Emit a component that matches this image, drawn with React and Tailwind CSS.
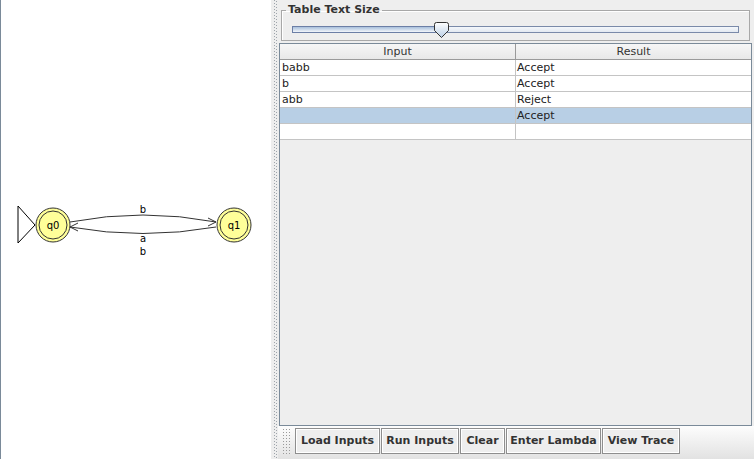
const rows = [
  { input: 'babb', result: 'Accept' },
  { input: 'b', result: 'Accept' },
  { input: 'abb', result: 'Reject' },
  { input: '', result: 'Accept', selected: true },
  { input: '', result: '' },
];

const buttons = [
  { label: 'Load Inputs', w: 'w-[85px]' },
  { label: 'Run Inputs', w: 'w-[78px]' },
  { label: 'Clear', w: 'w-[45px]' },
  { label: 'Enter Lambda', w: 'w-[95px]' },
  { label: 'View Trace', w: 'w-[78px]' },
];

function State({ cx, label }) {
  return (
    <g>
      <circle cx={cx} cy="225" r="17" fill="#ffff99" stroke="#333" strokeWidth="1" />
      <circle cx={cx} cy="225" r="14" fill="none" stroke="#333" strokeWidth="1" />
      <text x={cx} y="229" textAnchor="middle" fontSize="10" fill="#000" fontFamily="DejaVu Sans, sans-serif">
        {label}
      </text>
    </g>
  );
}

function Diagram() {
  return (
    <svg width="270" height="459" viewBox="1 0 270 459" className="block">
      <polygon points="18,206 35,225 18,243" fill="#fff" stroke="#000" strokeWidth="1" />
      <path d="M70 222 Q143 208 216 222" fill="none" stroke="#333" strokeWidth="1" />
      <path d="M208 218 L216 222 L208 226" fill="none" stroke="#333" strokeWidth="1" />
      <path d="M216 227 Q143 240 70 227" fill="none" stroke="#333" strokeWidth="1" />
      <path d="M78 223 L70 227 L78 231" fill="none" stroke="#333" strokeWidth="1" />
      <g fontSize="10" fill="#000" fontFamily="DejaVu Sans, sans-serif" textAnchor="middle">
        <text x="143" y="213">b</text>
        <text x="143" y="242">a</text>
        <text x="143" y="255">b</text>
      </g>
      <State cx={53} label="q0" />
      <State cx={234} label="q1" />
    </svg>
  );
}

export default function App() {
  return (
    <div className="flex h-[459px] w-[754px] overflow-hidden bg-[#eeeeee] text-[#222] font-['DejaVu_Sans',sans-serif]">
      {/* Graph canvas */}
      <div className="w-[271px] shrink-0 border-l border-[#7a8a99] bg-white">
        <Diagram />
      </div>

      {/* Split divider */}
      <div className="flex w-[7px] shrink-0 gap-[1px] pl-[3px]">
        <div className="w-[1px] bg-[linear-gradient(#9ea4ab_1px,transparent_1px)] bg-[length:1px_3px]" />
        <div className="mt-[1px] w-[1px] bg-[linear-gradient(#9ea4ab_1px,transparent_1px)] bg-[length:1px_3px]" />
      </div>

      {/* Right side */}
      <div className="flex flex-1 flex-col">
        <div className="h-[43px] pl-[3px] pr-[4px] pt-[3px]">
          <fieldset className="h-[38px] border border-[#a8a8a8] shadow-[inset_1px_1px_0_#fff]">
            <legend className="ml-[4px] px-[2px] text-[11px] font-bold leading-[14px] text-[#333]">
              Table Text Size
            </legend>
            <div className="relative mx-[10px] mt-[5px] h-[16px]">
              <div className="absolute left-0 right-0 top-[4px] h-[7px] border border-[#7a8aa9] bg-[linear-gradient(#f4f7fb,#e3e9f1)]" />
              <div className="absolute left-0 top-[4px] h-[7px] w-[146px] border border-[#6c7fa6] bg-[linear-gradient(#a9c0dc,#f2f6fb)]" />
              <svg width="15" height="16" viewBox="0 0 15 16" className="absolute left-[142px] top-0">
                <defs>
                  <linearGradient id="th" x1="0" y1="0" x2="0" y2="1">
                    <stop offset="0" stopColor="#ffffff" />
                    <stop offset="1" stopColor="#bcd0e6" />
                  </linearGradient>
                </defs>
                <path d="M2.5 0.5 H12.5 Q14.5 0.5 14.5 2.5 V8.5 L7.5 15.5 L0.5 8.5 V2.5 Q0.5 0.5 2.5 0.5 Z" fill="url(#th)" stroke="#333" strokeWidth="1" />
              </svg>
            </div>
          </fieldset>
        </div>

        {/* Table pane */}
        <div className="ml-[1px] mr-[2px] h-[383px] border border-[#7a8a99] bg-[#eeeeee]">
          <div className="grid grid-cols-[236px_1fr] text-[11px] leading-[15px]">
            <div className="h-[16px] border-b border-r border-[#9a9a9a] bg-[linear-gradient(#f6f6f6,#e8e8e8)] text-center text-[#333]">
              Input
            </div>
            <div className="h-[16px] border-b border-[#9a9a9a] bg-[linear-gradient(#f6f6f6,#e8e8e8)] text-center text-[#333]">
              Result
            </div>
            {rows.map((r, i) => (
              <div key={i} className="contents">
                <div className={`h-[16px] border-b border-r border-[#c4c4c4] pl-[2px] ${r.selected ? 'bg-[#b8cfe5]' : 'bg-white'}`}>
                  {r.input}
                </div>
                <div className={`h-[16px] border-b border-[#c4c4c4] pl-[1px] ${r.selected ? 'bg-[#b8cfe5]' : 'bg-white'}`}>
                  {r.result}
                </div>
              </div>
            ))}
          </div>
        </div>

        {/* Toolbar */}
        <div className="flex h-[33px] items-start bg-[linear-gradient(#fdfdfd,#e2e2e2)] pl-[4px] pt-[2px]">
          <div className="h-[26px] w-[10px] bg-[radial-gradient(#9a9a9a_0.7px,transparent_0.8px)] bg-[length:3px_3px]" />
          <div className="ml-[3px] flex gap-[1px]">
            {buttons.map((b) => (
              <button
                key={b.label}
                className={`${b.w} h-[26px] border border-[#8e8e8e] bg-[#eeeeee] text-[11px] font-bold text-[#333] shadow-[inset_1px_1px_0_#fff,inset_-1px_-1px_0_#fff]`}
              >
                {b.label}
              </button>
            ))}
          </div>
        </div>
      </div>
    </div>
  );
}
